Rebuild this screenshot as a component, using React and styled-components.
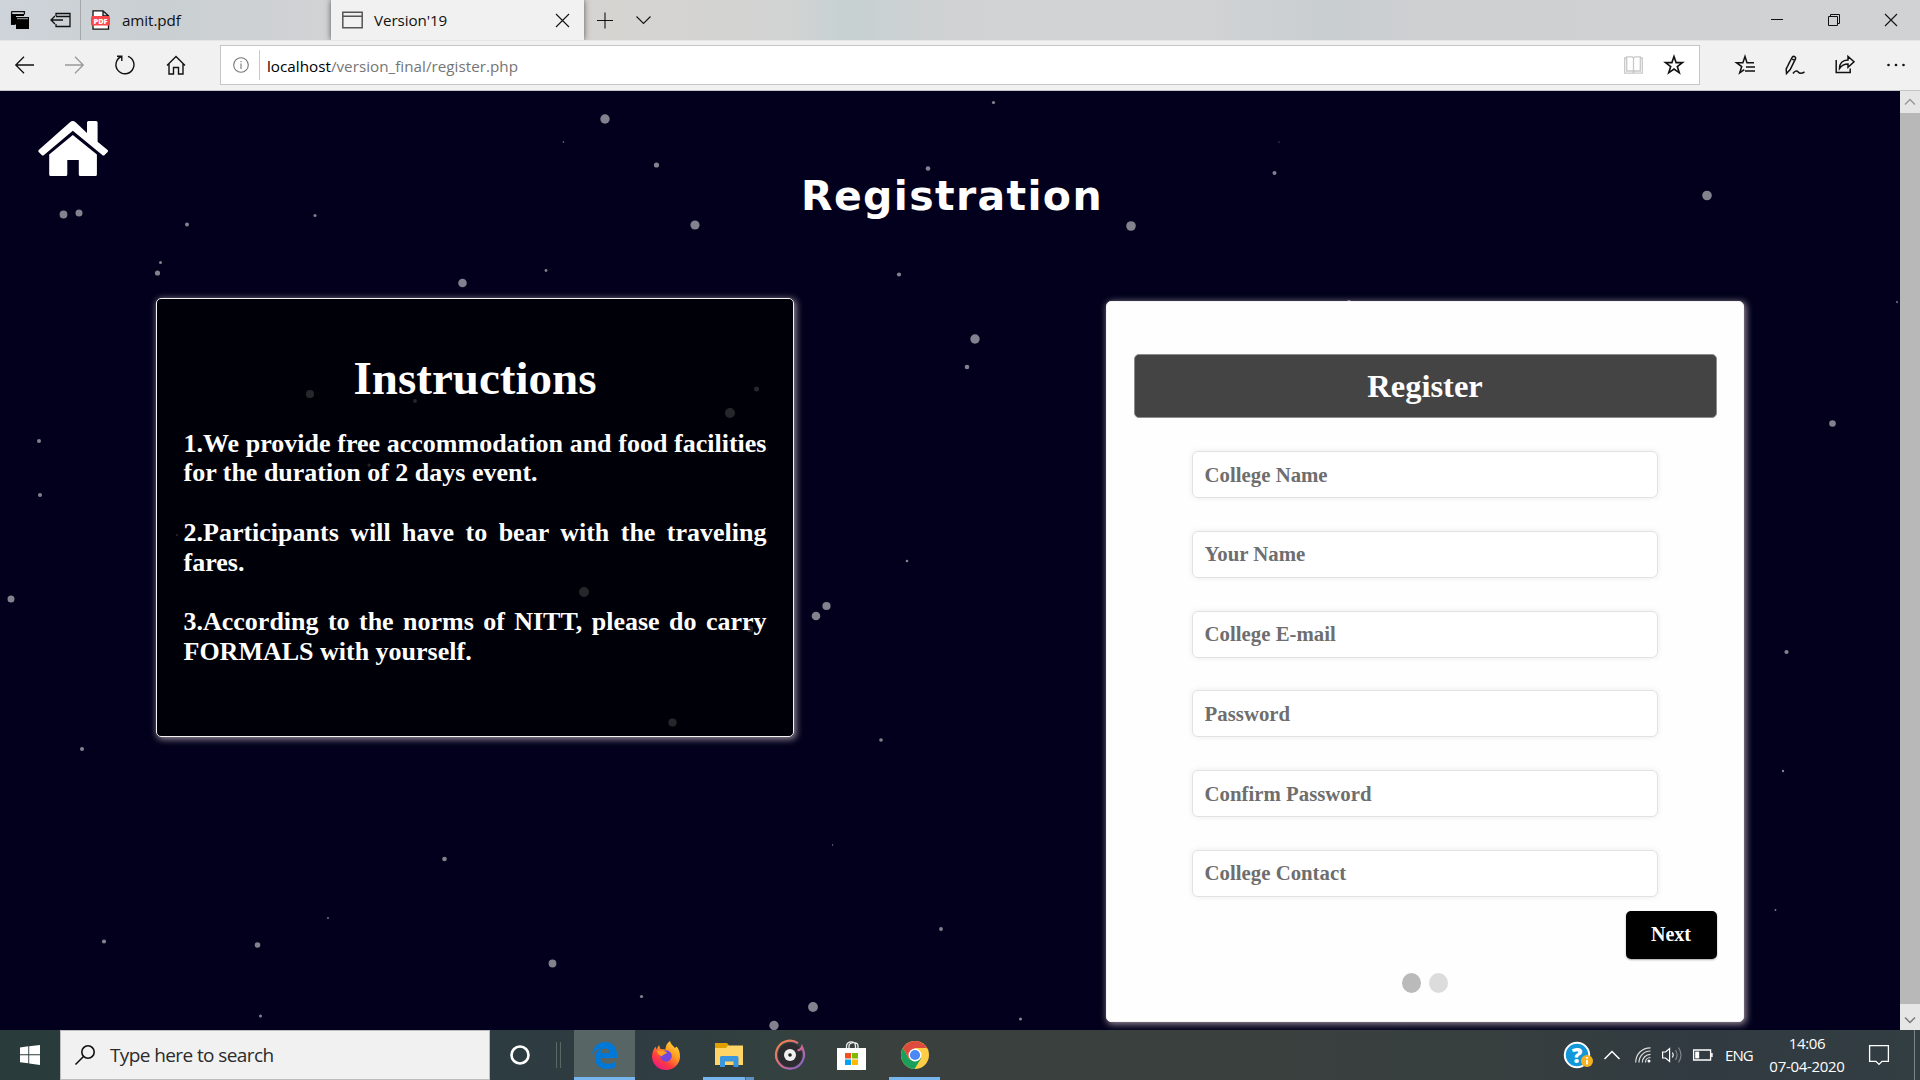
import React from "react";
import styled, { createGlobalStyle } from "styled-components";

const Global = createGlobalStyle`
  * { box-sizing: border-box; }
  html, body { margin: 0; padding: 0; background: #02001c; overflow: hidden; }
`;

const ui = `"Open Sans", "Noto Sans", sans-serif`;
const serif = `"Liberation Serif", "Times New Roman", serif`;

const Screen = styled.div`
  width: 1920px;
  height: 1080px;
  display: grid;
  grid-template-rows: 40px 51px 939px 50px;
  overflow: hidden;
  font-family: ${ui};
`;

const Icon = styled.svg`
  display: block;
  flex: none;
  overflow: visible;
  fill: none;
  stroke: ${(p) => p.$color || "#111"};
  stroke-width: ${(p) => p.$weight || 1.3};
  margin-right: ${(p) => p.$after || 0}px;
`;

const TabBar = styled.header`
  display: flex;
  align-items: stretch;
  background: linear-gradient(90deg, #ced4d9 0, #c9cfd2 150px, #d0d2d4 300px, #d6d4d1 620px, #d2d3d3 790px, #c6d1d2 850px, #d1d2d3 960px, #d1d3d4 1200px, #c9ced1 1330px, #cfd0d1 1440px, #d1d2d3 1920px);
`;
const Shelf = styled.div`
  width: 81px;
  display: flex;
  align-items: center;
  gap: 21px;
  padding-left: 11px;
  border-right: 1px solid #a4a8ab;
`;
const Tab = styled.div`
  display: flex;
  align-items: center;
  width: ${(p) => p.$width}px;
  padding-left: ${(p) => p.$pad}px;
  padding-right: 15px;
  gap: 11px;
  font-size: 15.2px;
  letter-spacing: -0.08px;
  color: #111;
  background: ${(p) => (p.$active ? "#f1f1f1" : "transparent")};
  box-shadow: ${(p) => (p.$active ? "0 0 6px rgba(0,0,0,.6)" : "none")};
  clip-path: ${(p) => (p.$active ? "inset(0 -8px 0 -8px)" : "none")};
`;
const TabTitle = styled.span`
  flex: 1;
  line-height: 20px;
  padding-bottom: 1px;
  white-space: nowrap;
`;
const TabActions = styled.div`
  flex: 1;
  display: flex;
  align-items: center;
  gap: 23px;
  padding-left: 13px;
`;
const WindowButtons = styled.div`
  display: flex;
  align-items: center;
  gap: 45px;
  padding-right: 23px;
`;

const Toolbar = styled.nav`
  display: flex;
  align-items: center;
  background: #f1f1f1;
  border-bottom: 1px solid #c4c4c4;
  box-shadow: inset 0 1px 0 #e6e6e6;
`;
const NavButtons = styled.div`
  width: 220px;
  display: flex;
  align-items: center;
  gap: 31px;
  padding-left: 15px;
`;
const Address = styled.div`
  width: 1480px;
  height: 40px;
  display: flex;
  align-items: center;
  padding: 0 15px 0 12px;
  background: #fff;
  border: 1px solid #c6c6c6;
`;
const AddressRule = styled.div`
  width: 1px;
  height: 30px;
  margin: 0 7px 0 10px;
  background: #c8c8c8;
`;
const Url = styled.div`
  flex: 1;
  padding-top: 2px;
  font-size: 15.2px;
  letter-spacing: 0.03px;
  color: #757575;
`;
const Host = styled.span`
  color: #000;
`;
const ToolButtons = styled.div`
  flex: 1;
  display: flex;
  align-items: center;
  gap: 30px;
  padding: 0 0 0 35px;
`;

const Viewport = styled.div`
  display: grid;
  grid-template-columns: 1900px 20px;
  min-height: 0;
`;
const Page = styled.main`
  position: relative;
  background: #02001c;
  overflow: hidden;
  display: flex;
  flex-direction: column;
`;
const Sky = styled.svg`
  position: absolute;
  inset: 0;
  fill: #fff;
  fill-opacity: 0.51;
`;
const PageHead = styled.div`
  height: 207px;
  display: grid;
  grid-template-columns: 700px 504px 696px;
`;
const HomeLink = styled.div`
  padding: 30px 0 0 38px;
`;
const Title = styled.h1`
  margin: 0;
  padding-top: 80px;
  text-align: center;
  white-space: nowrap;
  font: bold 41px/50px "DejaVu Sans", sans-serif;
  letter-spacing: 1.35px;
  color: #fff;
`;
const Panels = styled.div`
  position: relative;
  display: flex;
  align-items: flex-start;
  justify-content: space-between;
  padding: 0 156px;
`;
const Card = styled.section`
  width: 638px;
  height: ${(p) => p.$height}px;
  margin-top: ${(p) => p.$top || 0}px;
  padding: ${(p) => p.$padTop}px 26.5px 0;
  border: 1px solid #f4f4f4;
  border-radius: 5px;
  background: ${(p) => p.$bg};
  box-shadow: 1.5px 1.5px 7px rgba(255, 236, 236, 0.62);
  font-family: ${serif};
  font-weight: bold;
`;
const InstructionsTitle = styled.h2`
  margin: 0 0 24px;
  text-align: center;
  font-size: 47px;
  line-height: 54px;
  color: #fff;
`;
const Rule = styled.p`
  margin: 0 0 29.9px;
  font-size: 26px;
  line-height: 29.8px;
  text-align: justify;
  color: #fff;
`;
const FormTitle = styled.h2`
  margin: 0 0 33px;
  height: 64px;
  display: flex;
  align-items: center;
  justify-content: center;
  border: 1px solid #8c8c8c;
  border-radius: 5px;
  background: #444;
  color: #fff;
  font-size: 32.5px;
`;
const Fields = styled.div`
  display: flex;
  flex-direction: column;
  align-items: center;
  gap: 32.8px;
`;
const Field = styled.input`
  width: 466px;
  height: 47px;
  padding: 0 11.6px;
  border: 1px solid #e2e2e2;
  border-radius: 6px;
  background: #fff;
  box-shadow: 0 0 6px rgba(0, 0, 0, 0.08);
  font: bold 20.8px ${serif};
  color: #222;
  outline: none;
  &::placeholder { color: #6e6e6e; opacity: 1; }
`;
const Actions = styled.div`
  display: flex;
  justify-content: flex-end;
  margin-top: 14px;
`;
const NextButton = styled.button`
  width: 91px;
  height: 48px;
  border: 0;
  padding: 0;
  border-radius: 5px;
  background: #000;
  box-shadow: 0 1px 2px rgba(0, 0, 0, 0.35);
  color: #fff;
  font: bold 20px ${serif};
`;
const Steps = styled.div`
  display: flex;
  justify-content: center;
  gap: 8px;
  margin-top: 14px;
`;
const Step = styled.span`
  width: 19px;
  height: 20px;
  border-radius: 50%;
  background: ${(p) => (p.$on ? "#bababa" : "#dcdcdc")};
`;

const ScrollBar = styled.div`
  display: flex;
  flex-direction: column;
  background: #b8b8b8;
`;
const ScrollButton = styled.div`
  height: ${(p) => p.$h}px;
  display: flex;
  align-items: center;
  justify-content: center;
  padding-top: ${(p) => p.$drop || 0}px;
  background: #e6e6e6;
`;
const ScrollThumb = styled.div`
  flex: 1;
`;

const TaskBar = styled.footer`
  display: flex;
  align-items: stretch;
  background: linear-gradient(90deg, #293b3a 0, #2d3c40 500px, #2f3c42 640px, #33413f 780px, #3a403d 900px, #3a403e 1250px, #373f3f 1500px, #303a40 1700px, #333e43 1920px);
`;
const TaskButton = styled.div`
  width: ${(p) => p.$width}px;
  display: flex;
  align-items: center;
  justify-content: center;
  background: ${(p) => (p.$active ? "#576665" : "transparent")};
  border-bottom: ${(p) => (p.$open ? "3px solid #76b5ed" : "0")};
  padding-top: ${(p) => (p.$open ? 3 : 0)}px;
  margin-left: ${(p) => p.$gap || 0}px;
  ${(p) => p.$stacked && "border-style: solid; border-width: 0 0 3px; border-image: linear-gradient(90deg,#76b5ed 78%,#47688a 78%,#47688a 80%,#6090c0 80%) 3;"}
`;
const Search = styled.div`
  width: 430px;
  display: flex;
  align-items: center;
  gap: 15px;
  padding-left: 14px;
  border: 1px solid #bdbdbd;
  background: #f1f1f1;
  font-size: 19px;
  letter-spacing: -0.6px;
  color: #2b2b2b;
`;
const TaskDivider = styled.div`
  width: 5px;
  height: 26px;
  margin: 12px 13px 0 7px;
  border: solid #5b6965;
  border-width: 0 1px;
`;
const Tray = styled.div`
  display: flex;
  align-items: center;
  margin-left: auto;
  color: #fff;
`;
const TraySlot = styled.div`
  width: ${(p) => p.$width}px;
  padding-left: ${(p) => p.$lead || 0}px;
  display: flex;
  justify-content: flex-start;
`;
const Lang = styled.div`
  width: 44px;
  font-size: 15px;
  letter-spacing: -0.9px;
`;
const Clock = styled.div`
  width: 76px;
  font-size: 15px;
  line-height: 23px;
  letter-spacing: -0.3px;
  display: flex;
  flex-direction: column;
  align-items: center;
  white-space: nowrap;
`;
const DesktopEdge = styled.div`
  height: 50px;
  width: 6px;
  margin-left: 25px;
  border-left: 1px solid #7a8385;
`;

const stars = [
  [605, 119, 4.7], [63.5, 214.5, 3.9], [79, 213, 3.5], [187, 224.5, 2], [315, 215.5, 1.5], [563.5, 142, 0.8],
  [160.5, 262.5, 1.5], [157.5, 273, 2.6], [462.5, 283, 4.3], [546, 270.5, 1.4], [656.5, 165, 2.6], [695, 225, 4.6],
  [899, 274.5, 2.1], [928, 168.5, 2.3], [993.5, 102.5, 1.6], [1131, 226, 4.8], [1274.5, 173, 2], [1279, 142, 0.6],
  [1707, 195.5, 4.8], [975, 339, 4.7], [967, 367, 2.3], [907, 561, 1.3], [816, 616, 4.3], [826.5, 606, 4.1],
  [39, 441, 2], [40, 495, 2], [11, 599, 3.5], [82, 749, 2], [881, 740, 1.8], [444.5, 859, 2.3],
  [832.5, 845, 0.7], [328, 918, 0.9], [104, 941.5, 2.1], [257.5, 945, 2.8], [552.5, 963.5, 3.9], [641.5, 996.5, 1.6],
  [813, 1007, 4.9], [774, 1025.5, 4.7], [260.5, 1016, 1.5], [1020.5, 1019, 1.6], [941, 929, 1.9], [1832.5, 423.5, 3.3],
  [1786.5, 652, 2.1], [1783, 771, 1.2], [1775.5, 910, 0.9], [1897, 302, 0.9], [1349, 302, 2],
  [310, 394, 4.1], [415, 401, 1.9], [369, 465, 1.6], [756.5, 389, 2.5], [730, 413, 5], [584, 592, 4.9],
  [672.5, 722.5, 4.1], [177, 535, 1.1], [750, 629, 3.2],
];

const fields = ["College Name", "Your Name", "College E-mail", "Password", "Confirm Password", "College Contact"];

export default function App() {
  return (
    <Screen>
      <Global />
      <TabBar>
        <Shelf>
          <Icon width="18" height="18" viewBox="0 0 18 18">
            <path d="M.6 .6h12.8v3M.6 .6v12.8h4" />
            <path d="M0 3h13v2H5v8H0zM5 6h13v12H5z" fill="#000" stroke="none" />
            <path d="M6 7.6h11" stroke="#888" />
          </Icon>
          <Icon width="21" height="16" viewBox="0 0 21 16">
            <path d="M6 4V1.5h14v13H6V12M6 4.5h14M1 8h12M5 4L1 8l4 4" />
          </Icon>
        </Shelf>
        <Tab $width={250} $pad={10}>
          <Icon width="20" height="20" viewBox="0 0 20 20">
            <path d="M2 .8h10l5.5 5V19.2H2zM12 .8v5h5.5" fill="#fff" />
            <rect x="0" y="6" width="19" height="9.5" rx="1.5" fill="#f9474c" stroke="none" />
            <text x="9.5" y="13.6" textAnchor="middle" fontSize="7.5" fontWeight="800" fill="#fff" stroke="none">PDF</text>
          </Icon>
          <TabTitle>amit.pdf</TabTitle>
        </Tab>
        <Tab $active $width={253} $pad={11}>
          <Icon width="21" height="18" viewBox="0 0 21 18" $color="#555" $weight={1.5}>
            <path d="M.8 1.2h19.4v15.6H.8zM.8 5.2h19.4" />
          </Icon>
          <TabTitle>Version'19</TabTitle>
          <Icon width="13" height="13" viewBox="0 0 13 13" $weight={1.1}><path d="M0 0l13 13M13 0L0 13" /></Icon>
        </Tab>
        <TabActions>
          <Icon width="16" height="16" viewBox="0 0 16 16" $weight={1.1}><path d="M8 .5v16M0 8.5h16" /></Icon>
          <Icon width="15" height="8" viewBox="0 0 15 8" $weight={1.1}><path d="M.5 .5l7 7 7-7" /></Icon>
        </TabActions>
        <WindowButtons>
          <Icon width="12" height="12" viewBox="0 0 12 12" $weight={1}><path d="M0 5.5h12" /></Icon>
          <Icon width="12" height="12" viewBox="0 0 12 12" $weight={1}><path d="M.5 2.5h9v9h-9zM2.5 2.5v-2h9v9h-2" /></Icon>
          <Icon width="12" height="12" viewBox="0 0 12 12" $weight={1.1}><path d="M0 0l12 12M12 0L0 12" /></Icon>
        </WindowButtons>
      </TabBar>

      <Toolbar>
        <NavButtons>
          <Icon width="19" height="18" viewBox="0 0 19 18"><path d="M.8 9H19M9 .8L.8 9 9 17.2" /></Icon>
          <Icon width="19" height="18" viewBox="0 0 19 18" $color="#999"><path d="M0 9h18.2M10 .8L18.2 9 10 17.2" /></Icon>
          <Icon width="20" height="20" viewBox="0 0 20 20" $weight={1.4}><path d="M2 1.2h4.8V6M6.4 1.5A9 9 0 1 0 13 1.3" /></Icon>
          <Icon width="20" height="20" viewBox="0 0 20 20" $weight={1.4}><path d="M1 10.500l9-9 9 9M3 8.5V19h4.500v-6.500h5V19H17V8.5" /></Icon>
        </NavButtons>
        <Address>
          <Icon width="16" height="16" viewBox="0 0 16 16" $color="#777" $weight={1.1}><circle cx="8" cy="8" r="7.3" /><path d="M8 6.5V12M8 4v1.3" /></Icon>
          <AddressRule />
          <Url><Host>localhost</Host>/version_final/register.php</Url>
          <Icon width="19" height="18" viewBox="0 0 19 18" $color="#c9c9c9" $after={21}>
            <path d="M.7 2h2V.9h5.6L9.5 2l1.2-1.1h5.6V2h2v15.2H.7zM2.7 2v13h5.6l1.2 1.3 1.2-1.3h5.6V2M9.5 2v14.5" />
          </Icon>
          <Icon width="20" height="20" viewBox="0 0 20 20" $weight={1.6}><path d="M10 1.5l2.1 6.1h6.4l-5.2 3.9 2 6.3L10 14l-5.3 3.8 2-6.3L1.5 7.6h6.4z" /></Icon>
        </Address>
        <ToolButtons>
          <Icon width="20" height="20" viewBox="0 0 20 20" $weight={1.5}><path d="M19 7.7h-7L10 1.5 7.9 7.7H1.5l5.2 3.9-2 6.3L9.3 14.6M11 12h9M10 16h10" /></Icon>
          <Icon width="20" height="20" viewBox="0 0 20 20" $weight={1.5}><path d="M1.500 18.500L1.200 14 7 2.500c1-2 4.200-1 3.600 1.200L5.200 14.500 1.500 18.500zM6 4.500L3.500 9M7.200 4.200l3 1.200M8 18.500c1.500-2.500 3.800-3.300 5.200-1.500s3 2 6.300 0" /></Icon>
          <Icon width="20" height="20" viewBox="0 0 20 20" $weight={1.5}><path d="M1.200 5v12.500h14v-4M4.500 13.500c0-5 3-8.500 8.500-8.500V1.500l6 5.300-6 5.400V9c-4 0-6.500 1.500-8.500 4.500z" /></Icon>
          <Icon width="20" height="4" viewBox="0 0 20 4"><circle cx="3.500" cy="2" r="1.300" fill="#111" stroke="none" /><circle cx="11" cy="2" r="1.300" fill="#111" stroke="none" /><circle cx="18.500" cy="2" r="1.300" fill="#111" stroke="none" /></Icon>
        </ToolButtons>
      </Toolbar>

      <Viewport>
        <Page>
          <Sky width="1900" height="939" viewBox="0 91 1900 939">
            {stars.map(([x, y, r]) => <circle key={`${x}-${y}`} cx={x} cy={y} r={r} />)}
          </Sky>
          <PageHead>
            <HomeLink>
              <Icon width="71" height="56" viewBox="38 121 71 56">
                <path d="M70 122.2q2.8-2.4 5.6 0L87 133v-10.500q0-1.500 1.500-1.500h7.600q1.500 0 1.500 1.500v19.300l10 8.200q1 1 0 2l-3 3q-1.200 1-2.300 0L72.800 130.700 44 155q-1.100 1-2.300 0l-3-3q-1-1 0-2zM72.800 135l24.100 19.500V174.500q0 1.500-1.500 1.500H80.300q-1.500 0-1.500-1.500V160H67.300v14.500q0 1.500-1.500 1.500H50.700q-1.500 0-1.500-1.500V154.500z" fill="#fff" stroke="none" />
              </Icon>
            </HomeLink>
            <Title>Registration</Title>
          </PageHead>
          <Panels>
            <Card $height={439} $padTop={51.5} $bg="rgba(0,0,0,.7)">
              <InstructionsTitle>Instructions</InstructionsTitle>
              <Rule>1.We provide free accommodation and food facilities for the duration of 2 days event.</Rule>
              <Rule>2.Participants will have to bear with the traveling fares.</Rule>
              <Rule>3.According to the norms of NITT, please do carry FORMALS with yourself.</Rule>
            </Card>
            <Card $height={721} $top={3} $padTop={52} $bg="#fefefe">
              <FormTitle>Register</FormTitle>
              <Fields>
                {fields.map((name) => <Field key={name} placeholder={name} />)}
              </Fields>
              <Actions><NextButton>Next</NextButton></Actions>
              <Steps><Step $on /><Step /></Steps>
            </Card>
          </Panels>
        </Page>
        <ScrollBar>
          <ScrollButton $h={22}><Icon width="10" height="6" viewBox="0 0 10 6" $color="#999" $weight={1.5}><path d="M0 5.500l5-5 5 5" /></Icon></ScrollButton>
          <ScrollThumb />
          <ScrollButton $h={26} $drop={5}><Icon width="10" height="6" viewBox="0 0 10 6" $color="#777" $weight={1.5}><path d="M0 .5l5 5 5-5" /></Icon></ScrollButton>
        </ScrollBar>
      </Viewport>

      <TaskBar>
        <TaskButton $width={60}>
          <Icon width="20" height="20" viewBox="0 0 20 20"><path d="M0 2.500l8.300-1.200v8H0zM9.200 1.200L20 0v9.300H9.200zM0 10.300h8.300v8L0 17.200zM9.200 10.300H20V20L9.200 18.500z" fill="#fff" stroke="none" /></Icon>
        </TaskButton>
        <Search>
          <Icon width="20" height="20" viewBox="0 0 20 20" $weight={1.6}><circle cx="13" cy="7" r="6.2" /><path d="M8.500 11.500L.5 19.500" /></Icon>
          Type here to search
        </Search>
        <TaskButton $width={59}>
          <Icon width="20" height="20" viewBox="0 0 20 20" $color="#fff" $weight={2.6}><circle cx="10" cy="10" r="8.500" /></Icon>
        </TaskButton>
        <TaskDivider />
        <TaskButton $width={61} $active $open>
          <Icon width="25" height="27" viewBox="0 0 25 27">
            <path d="M0 12.500C1.300 4.800 6.500 0 13.200 0 20.500 0 25 5.300 25 12.300V16H8.300c.3 4 3.700 5.800 7.700 5.800 2.700 0 5-.7 7-1.900v5.300c-2.200 1.200-5 1.800-8 1.800C7.700 27 3 22.500 3 16.300c0-4.500 2.400-7.900 6.200-10C5.300 6.600 2 9 0 12.500zM8.500 11h9c0-2.600-1.500-4.400-4.300-4.400-2.600 0-4.300 1.900-4.700 4.400z" fill="#0078d7" stroke="none" />
          </Icon>
        </TaskButton>
        <TaskButton $width={62}>
          <Icon width="28" height="29" viewBox="0 0 28 29">
            <defs>
              <linearGradient id="fx" x1="1" y1="0" x2=".3" y2="1"><stop offset="0" stopColor="#ffe640" /><stop offset=".45" stopColor="#ff9a22" /><stop offset=".75" stopColor="#ff3b3f" /><stop offset="1" stopColor="#ed1a83" /></linearGradient>
            </defs>
            <path d="M14 29C6 29 0 23 0 15.500 0 11.500 1.500 8 3.700 5.500l.6 3L7 4l1.500 4 5 .5C13.500 4.500 15.500 1.500 18 0c.5 3 3 4.500 5 7l1.500-1.500C27 8 28 11.500 28 15.500 28 23 22 29 14 29z" fill="url(#fx)" stroke="none" />
            <circle cx="14" cy="15" r="5.800" fill="#7446dd" stroke="none" />
            <path d="M5 10c3-1 7-.5 10 1.500-1 2-4 1.500-5 4-2-1-4.500-2.500-5-5.500z" fill="#ffa024" stroke="none" />
          </Icon>
        </TaskButton>
        <TaskButton $width={51} $gap={6} $open $stacked>
          <Icon width="28" height="24" viewBox="0 0 28 24">
            <path d="M0 0h12l2 2.500V6H0z" fill="#dfa000" stroke="none" />
            <path d="M0 5h11l2-2.500h15V22H0z" fill="#ffd566" stroke="none" />
            <path d="M5 24V14.500Q5 13 6.500 13h15.500q1.500 0 1.500 1.500V24h-5v-5.500h-8.500V24z" fill="#3a96dd" stroke="none" />
          </Icon>
        </TaskButton>
        <TaskButton $width={72}>
          <Icon width="30" height="30" viewBox="0 0 30 30">
            <defs><linearGradient id="gv" x1="0" y1="0" x2="1" y2="1"><stop offset="0" stopColor="#f8893c" /><stop offset=".5" stopColor="#d66a8a" /><stop offset="1" stopColor="#7a62d8" /></linearGradient></defs>
            <circle cx="15" cy="15" r="12" fill="#2c2c30" stroke="none" />
            <path d="M23 3.200A14 14 0 1 0 28 9.500l-1-2.500q-1 3-4.500 3.500" stroke="url(#gv)" strokeWidth="2.200" />
            <circle cx="15" cy="15" r="6" fill="#f0f0f0" stroke="none" /><circle cx="15" cy="15" r="1.800" fill="#222" stroke="none" />
          </Icon>
        </TaskButton>
        <TaskButton $width={51}>
          <Icon width="29" height="29" viewBox="0 0 29 29">
            <path d="M9.500 8V5c0-5.500 9-5.500 9 0v3M12 8V5c0-4.500 9-4.500 9 0v3" stroke="#eee" strokeWidth="1.300" />
            <path d="M0 7h29v22H0z" fill="#fff" stroke="none" />
            <path d="M8 12h6v5.500H8z" fill="#f25022" stroke="none" /><path d="M15 12h6v5.500h-6z" fill="#7fba00" stroke="none" />
            <path d="M8 18.500h6V24H8z" fill="#00a4ef" stroke="none" /><path d="M15 18.500h6V24h-6z" fill="#ffb900" stroke="none" />
          </Icon>
        </TaskButton>
        <TaskButton $width={51} $gap={12} $open>
          <Icon width="28" height="28" viewBox="0 0 28 28">
            <circle cx="14" cy="14" r="14" fill="#ffcd46" stroke="none" />
            <path d="M14 14L7.900 17.500 1.900 7A14 14 0 0 0 13.500 28L20 17.500z" fill="#1a9f5b" stroke="none" />
            <path d="M1.900 7A14 14 0 0 1 26.100 7H14L8 17.500z" fill="#dd4b3e" stroke="none" />
            <circle cx="14" cy="14" r="6.500" fill="#fff" stroke="none" /><circle cx="14" cy="14" r="5.100" fill="#4a89f3" stroke="none" />
          </Icon>
        </TaskButton>
        <Tray>
          <TraySlot $width={40}>
            <Icon width="29" height="28" viewBox="0 0 29 28">
              <circle cx="13" cy="14" r="12.200" fill="#1298d8" stroke="#fff" strokeWidth="2" />
              <text x="13" y="21.500" textAnchor="middle" fontSize="21" fontWeight="800" fill="#fff" stroke="none">?</text>
              <circle cx="23" cy="20" r="6" fill="#f5b21e" stroke="none" />
              <path d="M23 19v4.500M23 16v1.700" stroke="#fff" strokeWidth="1.800" />
            </Icon>
          </TraySlot>
          <TraySlot $width={31}><Icon width="16" height="10" viewBox="0 0 16 10" $color="#fff" $weight={1.500}><path d="M.5 9L8 1.500 15.500 9" /></Icon></TraySlot>
          <TraySlot $width={27}>
            <Icon width="16" height="16" viewBox="0 0 16 16" $color="#ddd" $weight={1.200}>
              <path d="M.7 15.500C.7 7 7 .8 15.500.8M4 15.500C4 9 9 4 15.500 4M7.300 15.500c0-4.500 3.500-8.200 8.200-8.200M10.500 15.500c0-2.800 2-5 5-5" />
              <circle cx="14" cy="14" r="1.500" fill="#fff" stroke="none" />
            </Icon>
          </TraySlot>
          <TraySlot $width={31}>
            <Icon width="20" height="18" viewBox="0 0 20 18" $color="#fff" $weight={1.200}>
              <path d="M.6 6h3l4-3.500v13L3.600 12h-3zM10.500 6.500q1.500 2.500 0 5" />
              <path d="M13.500 4q3.200 5 0 10M16.500 1.500q5 7.500 0 15" stroke="#7e8889" />
            </Icon>
          </TraySlot>
          <TraySlot $width={32}>
            <Icon width="20" height="12" viewBox="0 0 20 12" $color="#fff"><path d="M.6 1h17v10H.6zM19 4v4" /><path d="M2.200 2.600h4v6.800h-4z" fill="#fff" stroke="none" /></Icon>
          </TraySlot>
          <Lang>ENG</Lang>
          <Clock><span>14:06</span><span>07-04-2020</span></Clock>
          <TraySlot $width={44} $lead={24}>
            <Icon width="20" height="20" viewBox="0 0 20 20" $color="#fff"><path d="M.6 .6h18.800v15.800H13L10 19.400 7 16.400H.6z" /></Icon>
          </TraySlot>
          <DesktopEdge />
        </Tray>
      </TaskBar>
    </Screen>
  );
}
